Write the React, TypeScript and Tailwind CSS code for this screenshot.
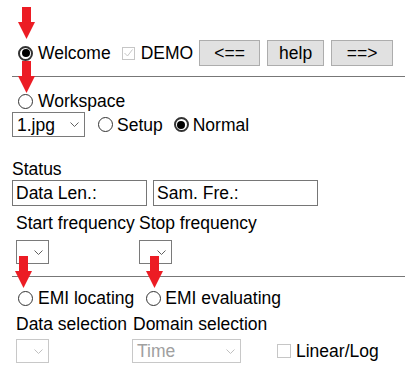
import React from "react";

function Arrow({ className }: { className: string }) {
  return (
    <svg
      className={"absolute " + className}
      width="17"
      height="32"
      viewBox="0 0 17 32"
    >
      <polygon points="4,0 13,0 13,15 17,15 8.5,32 0,15 4,15" fill="#ec1c24" />
    </svg>
  );
}

function Radio({ checked = false }: { checked?: boolean }) {
  return checked ? (
    <span className="block w-[15px] h-[15px] rounded-full border-2 border-[#333] bg-white flex items-center justify-center shrink-0">
      <span className="block w-[8px] h-[8px] rounded-full bg-black" />
    </span>
  ) : (
    <span className="block w-[15px] h-[15px] rounded-full border border-[#333] bg-white shrink-0" />
  );
}

function Chevron({ light = false }: { light?: boolean }) {
  return (
    <svg width="9" height="5" viewBox="0 0 9 5" className="shrink-0">
      <polyline
        points="0.5,0.5 4.5,4.5 8.5,0.5"
        fill="none"
        stroke={light ? "#c0c0c0" : "#606060"}
        strokeWidth="1"
      />
    </svg>
  );
}

function Button({ label, w }: { label: string; w: string }) {
  return (
    <div
      className={
        "h-[26px] border border-[#adadad] bg-[#e1e1e1] flex items-center justify-center " +
        w
      }
    >
      {label}
    </div>
  );
}

export default function App() {
  return (
    <div className="relative w-[411px] h-[371px] bg-white text-black text-[17.5px] leading-[20px] font-['Liberation_Sans',Arial,sans-serif] overflow-hidden">
      <Arrow className="left-[18px] top-[7px]" />
      <Arrow className="left-[18px] top-[61px]" />
      <Arrow className="left-[15px] top-[256px]" />
      <Arrow className="left-[146px] top-[256px]" />

      <div className="pl-3 pr-[6px] pt-[40px]">
        {/* welcome row */}
        <div className="flex items-center h-[26px]">
          <span className="ml-[6px] flex">
            <Radio checked />
          </span>
          <span className="ml-[5px]">Welcome</span>
          <span className="ml-[11px] w-[13px] h-[13px] border border-[#c6c6c6] flex items-center justify-center">
            <svg width="9" height="8" viewBox="0 0 9 8">
              <polyline points="0.5,4 3.5,7 8.5,0.5" fill="none" stroke="#c6c6c6" strokeWidth="1" />
            </svg>
          </span>
          <span className="ml-[6px]">DEMO</span>
          <div className="ml-[6px] flex gap-[7px]">
            <Button label="<==" w="w-[61px]" />
            <Button label="help" w="w-[57px]" />
            <Button label="==>" w="w-[62px]" />
          </div>
        </div>

        <div className="mt-[10px] border-t border-[#777]" />

        {/* workspace */}
        <div className="mt-[15px] flex items-center h-[18px]">
          <span className="ml-[6px] flex">
            <Radio />
          </span>
          <span className="ml-[5px]">Workspace</span>
        </div>

        <div className="mt-[2px] flex items-center h-[25px]">
          <div className="w-[73px] h-[25px] border border-[#7a7a7a] flex items-center justify-between pl-[4px] pr-[5px]">
            <span>1.jpg</span>
            <Chevron />
          </div>
          <span className="ml-[13px] flex">
            <Radio />
          </span>
          <span className="ml-[4px]">Setup</span>
          <span className="ml-[11px] flex">
            <Radio checked />
          </span>
          <span className="ml-[4px]">Normal</span>
        </div>

        {/* status */}
        <div className="mt-[22px] h-[18px]">Status</div>
        <div className="mt-[3px] flex gap-[6px]">
          <div className="w-[135px] h-[26px] border border-[#767676] flex items-center pl-[3px]">
            Data Len.:
          </div>
          <div className="w-[165px] h-[26px] border border-[#767676] flex items-center pl-[3px]">
            Sam. Fre.:
          </div>
        </div>

        <div className="pl-1 grid grid-cols-[123px_123px]">
          <div className="mt-[7px] h-[18px]">Start frequency</div>
          <div className="mt-[7px] h-[18px]">Stop frequency</div>
          <div className="mt-[9px] w-[33px] h-[24px] border border-[#7a7a7a] flex items-center justify-end pr-[5px]">
            <Chevron />
          </div>
          <div className="mt-[9px] w-[33px] h-[24px] border border-[#7a7a7a] flex items-center justify-end pr-[5px]">
            <Chevron />
          </div>
        </div>

        <div className="mt-[12px] border-t border-[#777]" />

        {/* EMI */}
        <div className="mt-[12px] flex items-center h-[18px]">
          <span className="ml-[6px] flex">
            <Radio />
          </span>
          <span className="ml-[5px]">EMI locating</span>
          <span className="ml-[12px] flex">
            <Radio />
          </span>
          <span className="ml-[4px]">EMI evaluating</span>
        </div>

        <div className="pl-1 mt-[7px] flex h-[18px]">
          <span className="w-[117px] shrink-0">Data selection</span>
          <span>Domain selection</span>
        </div>

        <div className="pl-1 mt-[7px] flex items-center">
          <div className="w-[33px] h-[24px] border border-[#c8c8c8] flex items-center justify-end pr-[5px]">
            <Chevron light />
          </div>
          <div className="ml-[83px] w-[109px] h-[24px] border border-[#c8c8c8] flex items-center justify-between pl-[4px] pr-[5px] text-[#a0a0a0]">
            <span>Time</span>
            <Chevron light />
          </div>
          <span className="ml-[36px] w-[14px] h-[14px] border border-[#c6c6c6]" />
          <span className="ml-[5px]">Linear/Log</span>
        </div>
      </div>
    </div>
  );
}
